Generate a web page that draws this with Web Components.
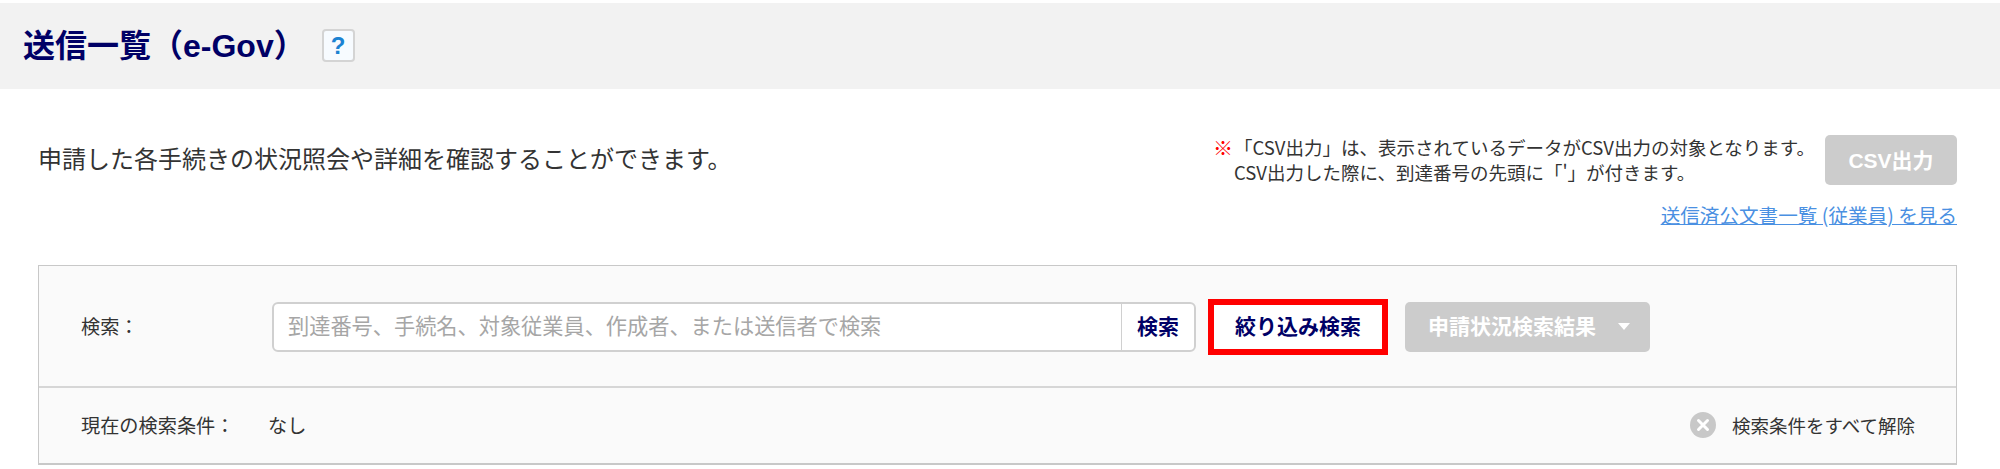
<!DOCTYPE html>
<html lang="ja">
<head>
<meta charset="UTF-8">
<title>送信一覧（e-Gov）</title>
<style>
  body { margin: 0; background: #fff; font-family: "Noto Sans CJK JP", "Liberation Sans", sans-serif; color: #333; }
</style>
</head>
<body>
<template id="page-title-tpl">
<style>
  :host { display: flex; align-items: center; margin-top: 3px; height: 86px; padding: 0 23px; background: #f2f2f2; box-sizing: border-box; }
  h1 { margin: 0; font: 700 32px/1 "Liberation Sans", "Noto Sans CJK JP", sans-serif; color: #000066; white-space: nowrap; }
  .help { margin: 0 0 2px 16px; width: 33px; height: 33px; box-sizing: border-box; border: 2px solid #d4d4d4; border-radius: 4px; background: #f7fbff; color: #1b82d2; font: 700 24px/29px "Liberation Sans", sans-serif; text-align: center; }
</style>
<h1><slot></slot></h1>
<div class="help">?</div>
</template>

<template id="intro-row-tpl">
<style>
  :host { display: flex; justify-content: space-between; align-items: flex-start; padding: 46px 43px 0 38px; }
  .lead { font-size: 24px; line-height: 36px; padding-top: 5px; white-space: nowrap; }
  .right { display: flex; flex-direction: column; align-items: flex-end; }
  .top { display: flex; align-items: center; gap: 10px; }
  a { margin-top: 17px; font-size: 19.6px; line-height: 26px; color: #4a90e2; text-decoration: underline; white-space: nowrap; }
</style>
<div class="lead"><slot name="lead"></slot></div>
<div class="right">
  <div class="top"><slot name="note"></slot><slot name="csv"></slot></div>
  <a href="#"><slot name="link"></slot></a>
</div>
</template>

<template id="csv-note-tpl">
<style>
  :host { display: grid; grid-template-columns: 21px auto; grid-auto-rows: 25px; font-size: 18.5px; line-height: 25px; white-space: nowrap; color: #333; }
  .mark { color: #f00; font-weight: 700; font-size: 20px; line-height: 25px; }
</style>
<span class="mark">※</span><span><slot name="a"></slot></span>
<span></span><span><slot name="b"></slot></span>
</template>

<template id="ui-button-tpl">
<style>
  :host { display: inline-flex; align-items: center; justify-content: center; box-sizing: border-box; height: 50px; padding-bottom: 3px; border-radius: 5px; background: #ccc; color: #fff; font-family: "Liberation Sans", "Noto Sans CJK JP", sans-serif; font-size: 21px; font-weight: 700; white-space: nowrap; }
  :host([outlined]) { height: 56px; background: #fff; color: #000066; border: 6px solid #f00; border-radius: 0; }
  :host([caret]) { padding-left: 3px; }
  .caret { display: none; margin-left: 22px; margin-top: 3px; width: 0; height: 0; border: 6px solid transparent; border-top: 7px solid #fff; border-bottom: 0; }
  :host([caret]) .caret { display: block; }
</style>
<slot></slot><span class="caret"></span>
</template>

<template id="search-panel-tpl">
<style>
  :host { display: block; margin: 37px 43px 0 38px; border: 1px solid #c8c8c8; border-bottom-width: 2px; background: #fafafa; }
  .search { display: flex; align-items: center; height: 122px; box-sizing: border-box; padding: 1px 42px 0; border-bottom: 2px solid #d6d6d6; }
  .label { width: 191px; font-size: 19.2px; padding-bottom: 2px; }
  .input { display: flex; height: 50px; width: 924px; box-sizing: border-box; border: 2px solid #d0d0d0; border-radius: 6px; background: #fff; }
  .ph { flex: 1; padding-left: 14px; font-size: 21.2px; line-height: 42px; color: #a6a6a6; white-space: nowrap; overflow: hidden; }
  .go { width: 72px; border-left: 1px solid #d0d0d0; text-align: center; color: #000066; font-size: 21px; font-weight: 700; line-height: 43px; }
  .btns { display: flex; align-items: center; margin-left: 12px; gap: 17px; }
  .cond { display: flex; align-items: center; height: 75px; padding: 0 41px 1px 42px; box-sizing: border-box; font-size: 19.2px; }
  .cond .label { width: 187px; padding: 0; }
  .clear { margin-left: auto; display: flex; align-items: center; gap: 16px; font-size: 18.5px; }
  svg { display: block; }
</style>
<div class="search">
  <div class="label"><slot name="label"></slot></div>
  <div class="input">
    <div class="ph"><slot name="placeholder"></slot></div>
    <div class="go"><slot name="go"></slot></div>
  </div>
  <div class="btns"><slot name="btn"></slot></div>
</div>
<div class="cond">
  <div class="label"><slot name="cond-label"></slot></div>
  <div><slot name="cond-value"></slot></div>
  <div class="clear">
    <svg width="26" height="26" viewBox="0 0 26 26"><circle cx="13" cy="13" r="13" fill="#c8c8c8"/><path d="M8.5 8.5l9 9M17.5 8.5l-9 9" stroke="#fff" stroke-width="3" stroke-linecap="round"/></svg>
    <span><slot name="clear"></slot></span>
  </div>
</div>
</template>

<page-title>送信一覧（e-Gov）</page-title>
<intro-row>
  <span slot="lead">申請した各手続きの状況照会や詳細を確認することができます。</span>
  <csv-note slot="note">
    <span slot="a">「CSV出力」は、表示されているデータがCSV出力の対象となります。</span>
    <span slot="b">CSV出力した際に、到達番号の先頭に「'」が付きます。</span>
  </csv-note>
  <ui-button slot="csv" style="width:132px">CSV出力</ui-button>
  <span slot="link">送信済公文書一覧 (従業員) を見る</span>
</intro-row>
<search-panel>
  <span slot="label">検索：</span>
  <span slot="placeholder">到達番号、手続名、対象従業員、作成者、または送信者で検索</span>
  <span slot="go">検索</span>
  <ui-button slot="btn" outlined style="width:180px">絞り込み検索</ui-button>
  <ui-button slot="btn" caret style="width:245px">申請状況検索結果</ui-button>
  <span slot="cond-label">現在の検索条件：</span>
  <span slot="cond-value">なし</span>
  <span slot="clear">検索条件をすべて解除</span>
</search-panel>

<script>
function define(name, tplId) {
  customElements.define(name, class extends HTMLElement {
    constructor() {
      super();
      let shadow = this.attachShadow({ mode: "open" });
      shadow.appendChild(document.getElementById(tplId).content.cloneNode(true));
    }
  });
}
define("page-title", "page-title-tpl");
define("intro-row", "intro-row-tpl");
define("csv-note", "csv-note-tpl");
define("ui-button", "ui-button-tpl");
define("search-panel", "search-panel-tpl");
</script>
</body>
</html>
